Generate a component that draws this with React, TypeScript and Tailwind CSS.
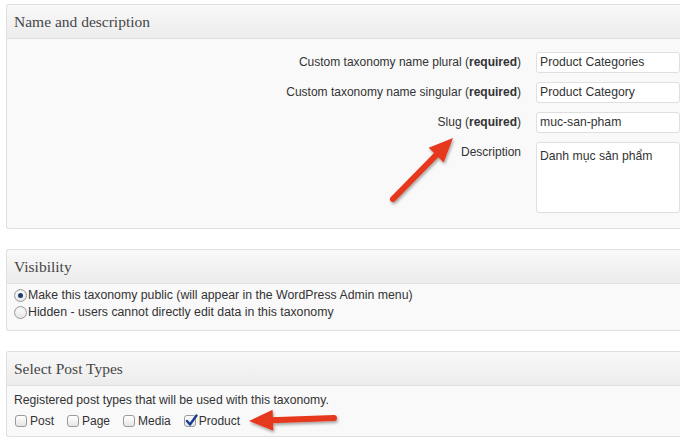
import React from 'react';

const sans = "font-['Liberation_Sans',Arial,sans-serif]";
const serif = "font-['Liberation_Serif',Georgia,serif]";

const Panel: React.FC<{ title: string; className?: string; children: React.ReactNode }> = ({
  title,
  className = '',
  children
}) => (
  <div className={`ml-[6px] border border-r-0 border-[#dfdfdf] rounded-l-[3px] bg-[#f9f9f9] ${className}`}>
    <div className="h-[34px] flex items-center pl-[7px] border-b border-[#dfdfdf] bg-gradient-to-b from-[#f9f9f9] to-[#ececec] rounded-tl-[3px]">
      <h3 className={`${serif} text-[15.5px] text-[#464646]`}>{title}</h3>
    </div>
    {children}
  </div>
);

const Field: React.FC<{ label: string; required?: boolean; value: string; area?: boolean }> = ({
  label,
  required,
  value,
  area
}) => (
  <div className="flex items-start gap-[15px]">
    <div className="w-[514px] text-right pt-[1px] text-[#333]">
      {label}
      {required && (
        <>
          {' '}(<b>required</b>)
        </>
      )}
    </div>
    <div
      className={`flex-1 bg-white border border-[#dfdfdf] rounded-[3px] px-[3px] text-[12.2px] text-[#333] ${
        area ? 'h-[71px] pt-[4px]' : 'h-[21px] leading-[19px]'
      }`}
    >
      {value}
    </div>
  </div>
);

const Radio: React.FC<{ checked?: boolean }> = ({ checked }) => (
  <span className="w-[13px] h-[13px] rounded-full border border-[#9a9a9a] bg-gradient-to-b from-white to-[#e6e6e6] flex items-center justify-center shadow-[inset_0_1px_1px_rgba(0,0,0,0.1)]">
    {checked && <span className="w-[5px] h-[5px] rounded-full bg-[#1b3d6b]" />}
  </span>
);

const Check: React.FC<{ checked?: boolean }> = ({ checked }) => (
  <span className="relative w-[12px] h-[12px] rounded-[3px] border border-[#9a9a9a] bg-gradient-to-b from-white to-[#e6e6e6]">
    {checked && (
      <svg className="absolute -top-[2px] left-[0px] w-[13px] h-[13px]" viewBox="0 0 13 13">
        <path d="M2 7 L5 10.5 L11.5 1.5" fill="none" stroke="#1b3d8f" strokeWidth="2.4" strokeLinecap="round" strokeLinejoin="round" />
      </svg>
    )}
  </span>
);

const Arrow: React.FC<{ className: string; x1: number; y1: number; x2: number; y2: number; w: number; h: number }> = ({
  className,
  x1,
  y1,
  x2,
  y2,
  w,
  h
}) => {
  // head drawn as a triangle at (x2, y2)
  const ang = Math.atan2(y2 - y1, x2 - x1);
  const len = 24;
  const half = 10.5;
  const bx = x2 - Math.cos(ang) * len;
  const by = y2 - Math.sin(ang) * len;
  const px = -Math.sin(ang) * half;
  const py = Math.cos(ang) * half;
  return (
    <svg className={`absolute pointer-events-none ${className}`} width={w} height={h} viewBox={`0 0 ${w} ${h}`}>
      <defs>
        <filter id="sh" x="-20%" y="-20%" width="140%" height="140%">
          <feDropShadow dx="1" dy="2" stdDeviation="1.5" floodColor="#000" floodOpacity="0.35" />
        </filter>
      </defs>
      <g filter="url(#sh)">
        <line x1={x1} y1={y1} x2={bx + Math.cos(ang) * 2} y2={by + Math.sin(ang) * 2} stroke="#e5391d" strokeWidth="6" strokeLinecap="round" />
        <polygon points={`${x2},${y2} ${bx + px},${by + py} ${bx - px},${by - py}`} fill="#e5391d" />
      </g>
    </svg>
  );
};

export default function App() {
  return (
    <div className={`${sans} relative w-[680px] h-[437px] overflow-hidden bg-white text-[12px] text-[#333]`}>
      <div className="pt-[4px]">
        <Panel title="Name and description" className="h-[225px]">
          <div className="pt-[13px] flex flex-col gap-[9px]">
            <Field label="Custom taxonomy name plural" required value="Product Categories" />
            <Field label="Custom taxonomy name singular" required value="Product Category" />
            <Field label="Slug" required value="muc-san-pham" />
            <Field label="Description" value="Danh mục sản phẩm" area />
          </div>
        </Panel>

        <Panel title="Visibility" className="mt-[20px] h-[82px]">
          <div className="pl-[7px] pt-[5px] flex flex-col gap-[4px] text-[12.3px]">
            <label className="flex items-center gap-[1px] h-[13px]">
              <Radio checked />
              <span>Make this taxonomy public (will appear in the WordPress Admin menu)</span>
            </label>
            <label className="flex items-center gap-[1px] h-[13px]">
              <Radio />
              <span>Hidden - users cannot directly edit data in this taxonomy</span>
            </label>
          </div>
        </Panel>

        <Panel title="Select Post Types" className="mt-[20px] h-[86px]">
          <div className="pl-[7px] pt-[5px]">
            <p className="h-[16px] text-[12.2px]">Registered post types that will be used with this taxonomy.</p>
            <div className="flex items-center gap-[13px] mt-[5px] pl-[1px]">
              {['Post', 'Page', 'Media', 'Product'].map((t) => (
                <label key={t} className="flex items-center gap-[3px]">
                  <Check checked={t === 'Product'} />
                  <span>{t}</span>
                </label>
              ))}
            </div>
          </div>
        </Panel>
      </div>

      <Arrow className="left-[380px] top-[126px]" w={90} h={90} x1={13} y1={73} x2={73} y2={12} />
      <Arrow className="left-[238px] top-[400px]" w={110} h={37} x1={96} y1={18} x2={11} y2={21} />
    </div>
  );
}
